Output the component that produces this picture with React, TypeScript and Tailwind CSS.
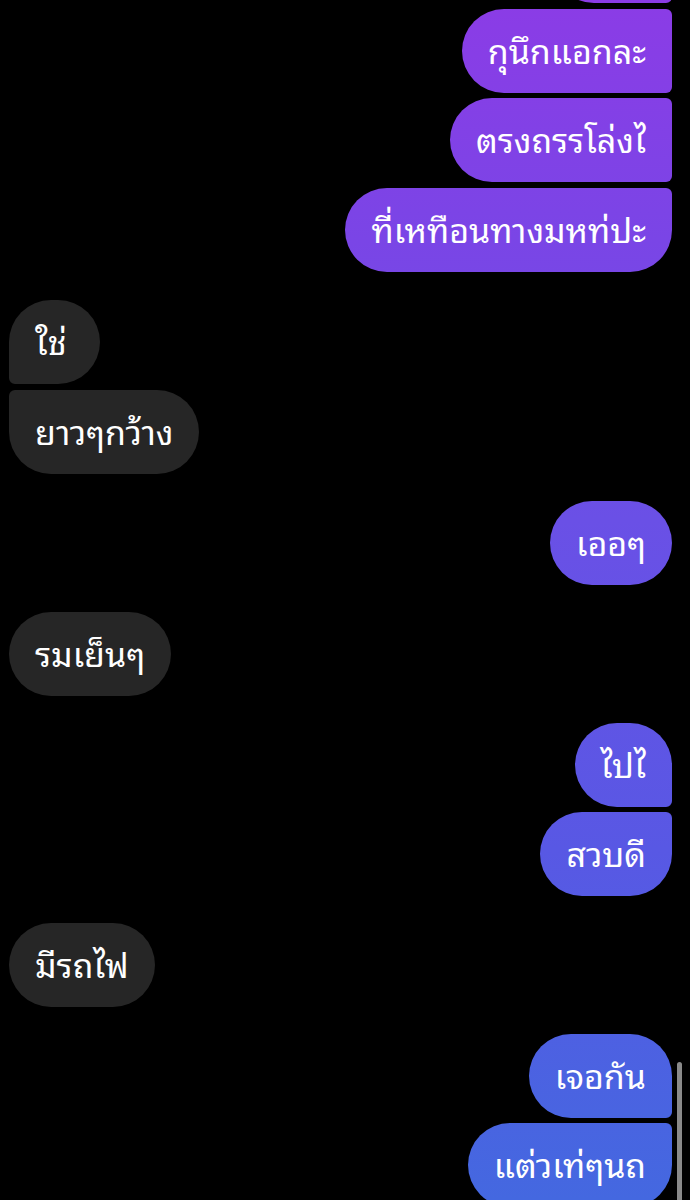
import React from "react";

type Msg = { text: string; me: boolean; mt: number };

const R = "42px";
const S = "6px";

const msgs: Msg[] = [
  { text: "กุนึกแอกละ", me: true, mt: 6 },
  { text: "ตรงถรรโล่งไ", me: true, mt: 5 },
  { text: "ที่เหทือนทางมหท่ปะ", me: true, mt: 6 },
  { text: "ใช่", me: false, mt: 28 },
  { text: "ยาวๆกว้าง", me: false, mt: 6 },
  { text: "เออๆ", me: true, mt: 27 },
  { text: "รมเย็นๆ", me: false, mt: 27 },
  { text: "ไปไ", me: true, mt: 27 },
  { text: "สวบดี", me: true, mt: 5 },
  { text: "มีรถไฟ", me: false, mt: 27 },
  { text: "เจอกัน", me: true, mt: 27 },
  { text: "แต่วเท่ๆนถ", me: true, mt: 5 },
];

function Bubble({ m, first, last }: { m: Msg; first: boolean; last: boolean }) {
  const radius = m.me
    ? `${R} ${first ? R : S} ${last ? R : S} ${R}`
    : `${first ? R : S} ${R} ${R} ${last ? R : S}`;
  return (
    <div className={m.me ? "flex justify-end" : "flex justify-start"} style={{ marginTop: m.mt }}>
      <div
        className={
          m.me
            ? "h-[84px] min-w-[91px] flex items-center px-[26px] pb-[4px] text-white bg-fixed bg-[linear-gradient(180deg,#8b3ce6_0px,#7a45e6_240px,#6a50e6_520px,#5858e4_850px,#4468e0_1200px)]"
            : "h-[84px] min-w-[91px] flex items-center px-[26px] pb-[4px] text-white bg-[#262626]"
        }
        style={{ borderRadius: radius }}
      >
        <span className="text-[34px] leading-none whitespace-nowrap">{m.text}</span>
      </div>
    </div>
  );
}

export default function App() {
  const items = msgs.map((m, i) => {
    const prev = msgs[i - 1];
    const next = msgs[i + 1];
    const groupedPrev = (prev && prev.me === m.me && m.mt < 10) || i === 0;
    const groupedNext = next && next.me === m.me && next.mt < 10;
    return { m, first: !groupedPrev, last: !groupedNext };
  });
  return (
    <div
      className="relative w-[690px] h-[1200px] overflow-hidden bg-black"
      style={{ fontFamily: '"Noto Sans Thai Looped", "Noto Sans Thai", "Noto Sans", sans-serif' }}
    >
      <div className="pl-[9px] pr-[18px]">
        <div className="flex justify-end mt-[-81px]">
          <div
            className="h-[84px] w-[120px] bg-fixed bg-[linear-gradient(180deg,#8b3ce6_0px,#7a45e6_240px,#6a50e6_520px,#5858e4_850px,#4468e0_1200px)]"
            style={{ borderRadius: `${R} ${R} ${S} ${R}` }}
          />
        </div>
        {items.map((it, i) => (
          <Bubble key={i} m={it.m} first={it.first} last={it.last} />
        ))}
      </div>
      <div className="absolute right-[8px] top-[1062px] w-[5px] h-[150px] rounded-full bg-[#8a8a8a]" />
    </div>
  );
}
